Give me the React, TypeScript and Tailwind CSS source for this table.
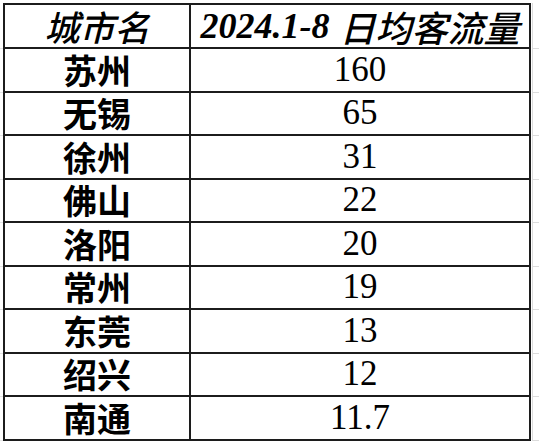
import React from "react";

const rows: [string, string][] = [
  ["苏州", "160"],
  ["无锡", "65"],
  ["徐州", "31"],
  ["佛山", "22"],
  ["洛阳", "20"],
  ["常州", "19"],
  ["东莞", "13"],
  ["绍兴", "12"],
  ["南通", "11.7"],
];

const cjk = { fontFamily: '"Noto Sans CJK SC", "Noto Sans", sans-serif' };
const serif = { fontFamily: '"Liberation Serif", "Noto Sans CJK SC", serif' };

export default function App() {
  return (
    <div className="w-[539px] h-[442px] bg-white overflow-hidden pt-[3px] text-black">
      <div className="flex flex-col">
        {/* header */}
        <div className="flex h-[46px]">
          <div className="w-[3px] border-b border-[#e4e4e4]" />
          <div
            className="w-[188px] border-2 border-[#1c1c1c] flex items-center justify-center text-[35px] leading-[40px] font-medium italic"
            style={cjk}
          >
            城市名
          </div>
          <div
            className="w-[340px] border-y-2 border-r-2 border-[#1c1c1c] flex items-center justify-center text-[36px] leading-[40px] font-bold italic whitespace-nowrap"
            style={serif}
          >
            <span>2024.1-8</span>
            <span className="ml-[10px] font-medium" style={cjk}>
              日均客流量
            </span>
          </div>
          <div className="flex-1 ml-[1px] border-l border-b border-[#dcdcdc]" />
        </div>
        {rows.map(([city, val]) => (
          <div key={city} className="flex h-[43.5px]">
            <div className="w-[3px] border-b border-[#e4e4e4]" />
            <div
              className="w-[188px] border-x-2 border-b-2 border-[#1c1c1c] flex items-center justify-center text-[34px] leading-[36px] font-bold"
              style={cjk}
            >
              {city}
            </div>
            <div
              className="w-[340px] border-r-2 border-b-2 border-[#1c1c1c] flex items-center justify-center text-[35px] leading-[36px]"
              style={serif}
            >
              {val}
            </div>
            <div className="flex-1 ml-[1px] border-l border-b border-[#dcdcdc]" />
          </div>
        ))}
      </div>
    </div>
  );
}
